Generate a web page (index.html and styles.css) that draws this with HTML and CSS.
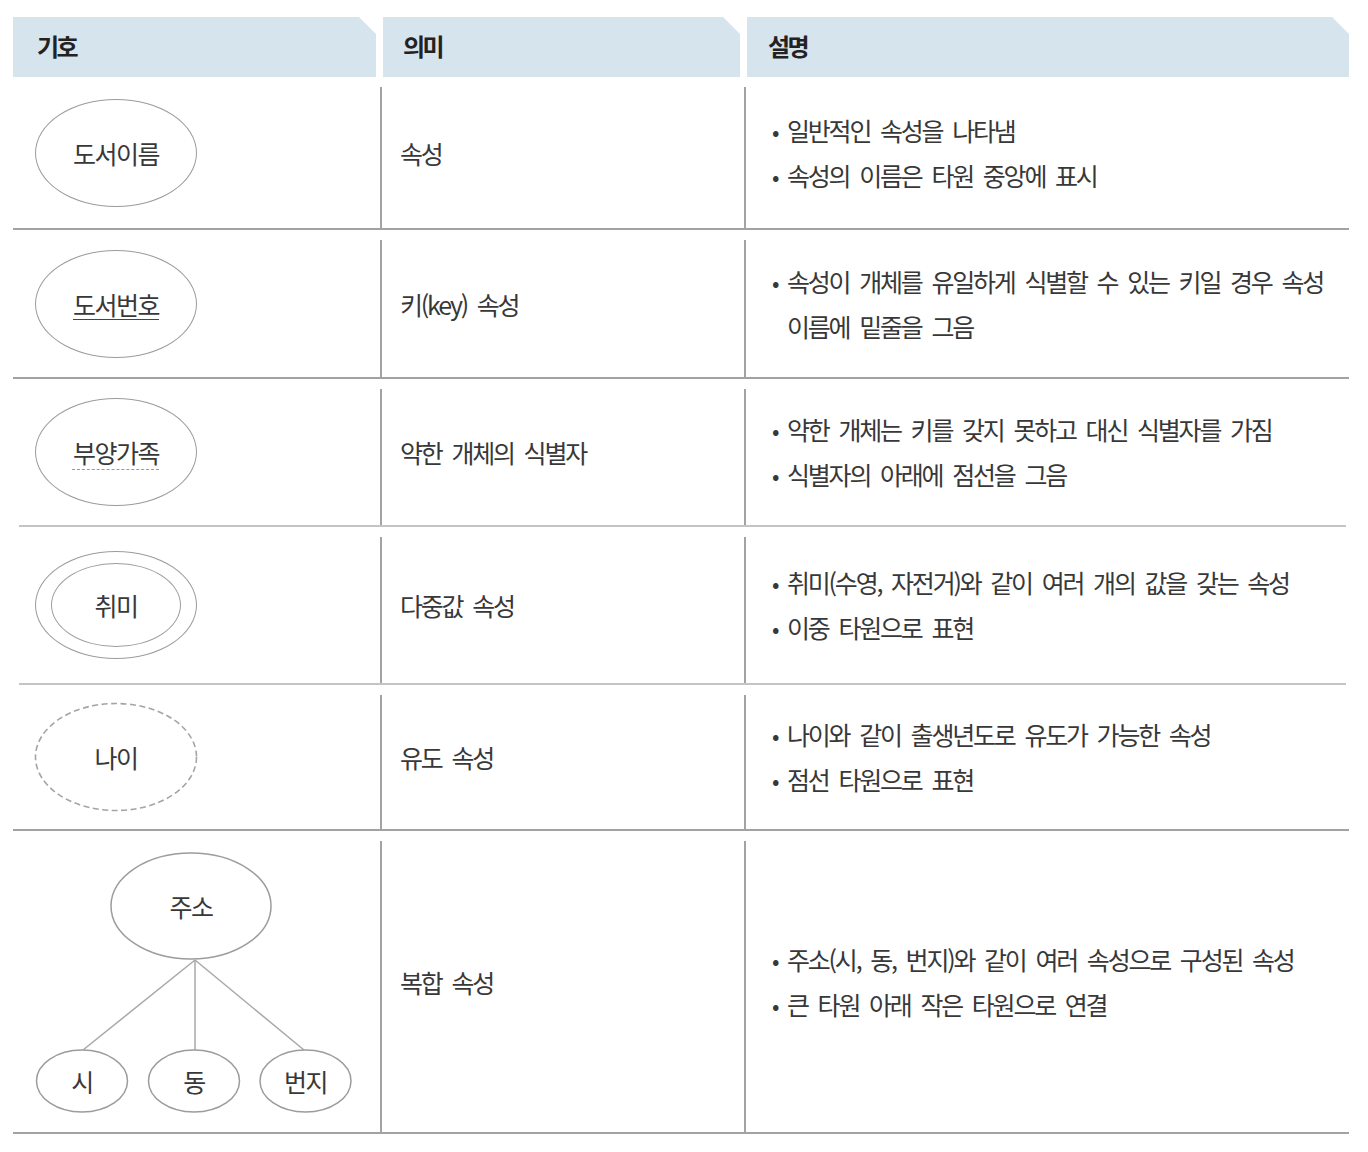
FILE: index.html
```html
<!DOCTYPE html>
<html lang="ko">
<head>
<meta charset="utf-8">
<title>속성 기호</title>
<link rel="stylesheet" href="styles.css">
</head>
<body>
<div class="table">
  <div class="head">
    <div class="hcell h1">기호</div>
    <div class="hcell h2">의미</div>
    <div class="hcell h3">설명</div>
  </div>

  <div class="row r1">
    <div class="sym"><div class="ell">도서이름</div></div>
    <div class="mean">속성</div>
    <div class="desc">
      <ul>
        <li><span class="b">•</span><span>일반적인 속성을 나타냄</span></li>
        <li><span class="b">•</span><span>속성의 이름은 타원 중앙에 표시</span></li>
      </ul>
    </div>
  </div>
  <div class="sep"></div>

  <div class="row r2">
    <div class="sym"><div class="ell"><span class="key">도서번호</span></div></div>
    <div class="mean">키(key) 속성</div>
    <div class="desc">
      <ul>
        <li><span class="b">•</span><span>속성이 개체를 유일하게 식별할 수 있는 키일 경우 속성<br>이름에 밑줄을 그음</span></li>
      </ul>
    </div>
  </div>
  <div class="sep"></div>

  <div class="row r3">
    <div class="sym"><div class="ell"><span class="weak">부양가족</span></div></div>
    <div class="mean">약한 개체의 식별자</div>
    <div class="desc">
      <ul>
        <li><span class="b">•</span><span>약한 개체는 키를 갖지 못하고 대신 식별자를 가짐</span></li>
        <li><span class="b">•</span><span>식별자의 아래에 점선을 그음</span></li>
      </ul>
    </div>
  </div>
  <div class="sep light"></div>

  <div class="row r4">
    <div class="sym"><div class="ell double"><div class="inner">취미</div></div></div>
    <div class="mean">다중값 속성</div>
    <div class="desc">
      <ul>
        <li><span class="b">•</span><span>취미(수영, 자전거)와 같이 여러 개의 값을 갖는 속성</span></li>
        <li><span class="b">•</span><span>이중 타원으로 표현</span></li>
      </ul>
    </div>
  </div>
  <div class="sep light"></div>

  <div class="row r5">
    <div class="sym">
      <svg class="dash-svg" width="164" height="110" viewBox="0 0 164 110" xmlns="http://www.w3.org/2000/svg">
        <ellipse cx="82" cy="55" rx="80.5" ry="53.5"/>
        <text x="82" y="55">나이</text>
      </svg>
    </div>
    <div class="mean">유도 속성</div>
    <div class="desc">
      <ul>
        <li><span class="b">•</span><span>나이와 같이 출생년도로 유도가 가능한 속성</span></li>
        <li><span class="b">•</span><span>점선 타원으로 표현</span></li>
      </ul>
    </div>
  </div>
  <div class="sep"></div>

  <div class="row r6">
    <div class="sym tree">
      <svg class="tree-svg" width="367" height="301" viewBox="0 0 367 301" xmlns="http://www.w3.org/2000/svg">
        <g class="lines">
          <line x1="182" y1="129" x2="70" y2="219"/>
          <line x1="182" y1="129" x2="182" y2="219"/>
          <line x1="182" y1="129" x2="291" y2="219"/>
        </g>
        <g class="nodes">
          <ellipse cx="178" cy="75" rx="80" ry="53"/>
          <ellipse cx="69" cy="250" rx="45.5" ry="31"/>
          <ellipse cx="181" cy="250" rx="45.5" ry="31"/>
          <ellipse cx="292.5" cy="250" rx="45.5" ry="31"/>
        </g>
        <g class="labels">
          <text x="178" y="75">주소</text>
          <text x="69" y="250">시</text>
          <text x="181" y="250">동</text>
          <text x="292.5" y="250">번지</text>
        </g>
      </svg>
    </div>
    <div class="mean">복합 속성</div>
    <div class="desc">
      <ul>
        <li><span class="b">•</span><span>주소(시, 동, 번지)와 같이 여러 속성으로 구성된 속성</span></li>
        <li><span class="b">•</span><span>큰 타원 아래 작은 타원으로 연결</span></li>
      </ul>
    </div>
  </div>
  <div class="sep"></div>
</div>
</body>
</html>
```

FILE: styles.css
```css
* { box-sizing: border-box; }

html, body {
  margin: 0;
  padding: 0;
  background: #ffffff;
}

body {
  font-family: "Noto Sans CJK KR", "Noto Sans", sans-serif;
  color: #383838;
  font-size: 25px;
}

.table {
  margin: 17px 0 0 13px;
  width: 1336px;
}

.head {
  display: grid;
  grid-template-columns: 367px 364px 605px;
  height: 60px;
}

.hcell {
  background: #d6e4ed;
  display: flex;
  align-items: center;
  font-weight: 700;
  font-size: 24px;
  color: #222;
  letter-spacing: -2.5px;
  padding-bottom: 4px;
  clip-path: polygon(0 0, calc(100% - 17px) 0, 100% 17px, 100% 100%, 0 100%);
}

.h1 { margin-right: 4px; padding-left: 24px; }
.h2 { margin-left: 3px; margin-right: 4px; padding-left: 20px; }
.h3 { margin-left: 3px; padding-left: 21px; }

.row {
  display: grid;
  grid-template-columns: 367px 364px 605px;
}

.r1 { height: 151px; }
.r2 { height: 147px; }
.r3 { height: 146px; }
.r4 { height: 156px; }
.r5 { height: 144px; }
.r6 { height: 301px; }

.sep {
  height: 2px;
  background: #a2a2a2;
}

.sep.light {
  margin: 0 3px 0 6px;
  background: #c4c4c4;
}

.sym {
  display: flex;
  align-items: center;
  padding-left: 22px;
}

.ell {
  width: 162px;
  height: 108px;
  border: 1.5px solid #9c9c9c;
  border-radius: 50%;
  display: flex;
  align-items: center;
  justify-content: center;
  font-size: 25px;
  color: #383838;
  letter-spacing: -1.5px;
}

.ell.double .inner {
  width: 130px;
  height: 84px;
  border: 1.5px solid #9c9c9c;
  border-radius: 50%;
  display: flex;
  align-items: center;
  justify-content: center;
}

.key {
  text-decoration: underline solid #444;
  text-decoration-thickness: 1px;
  text-underline-offset: 4px;
}

.weak {
  text-decoration: underline dashed #9a9a9a;
  text-decoration-thickness: 1px;
  text-underline-offset: 6px;
}

.dash-svg {
  display: block;
  margin-left: -1px;
}

.dash-svg ellipse {
  fill: none;
  stroke: #a4a4a4;
  stroke-width: 1.6;
  stroke-dasharray: 6 3.5;
}

.dash-svg text,
.tree-svg .labels text {
  font-family: "Noto Sans CJK KR", "Noto Sans", sans-serif;
  font-size: 25px;
  letter-spacing: -1.5px;
  fill: #383838;
  text-anchor: middle;
  dominant-baseline: central;
}

.tree {
  padding-left: 0;
  align-items: stretch;
}

.tree-svg { display: block; }

.tree-svg .lines line {
  stroke: #a8a8a8;
  stroke-width: 1.5;
}

.tree-svg .nodes ellipse {
  fill: #ffffff;
  stroke: #9c9c9c;
  stroke-width: 1.5;
}

.mean,
.desc {
  margin-top: 10px;
  padding-bottom: 10px;
  border-left: 2px solid #a3a3a3;
  display: flex;
  align-items: center;
}

.mean {
  padding-left: 18px;
  letter-spacing: -2.2px;
  word-spacing: 5px;
}

.desc {
  padding-left: 26px;
}

.desc ul {
  list-style: none;
  margin: 0;
  padding: 0;
}

.desc li {
  display: flex;
  line-height: 45px;
  white-space: nowrap;
  word-spacing: 5px;
  letter-spacing: -2.2px;
}

.desc li .b {
  width: 15px;
  flex: none;
  font-size: 22px;
  letter-spacing: 0;
}
```
